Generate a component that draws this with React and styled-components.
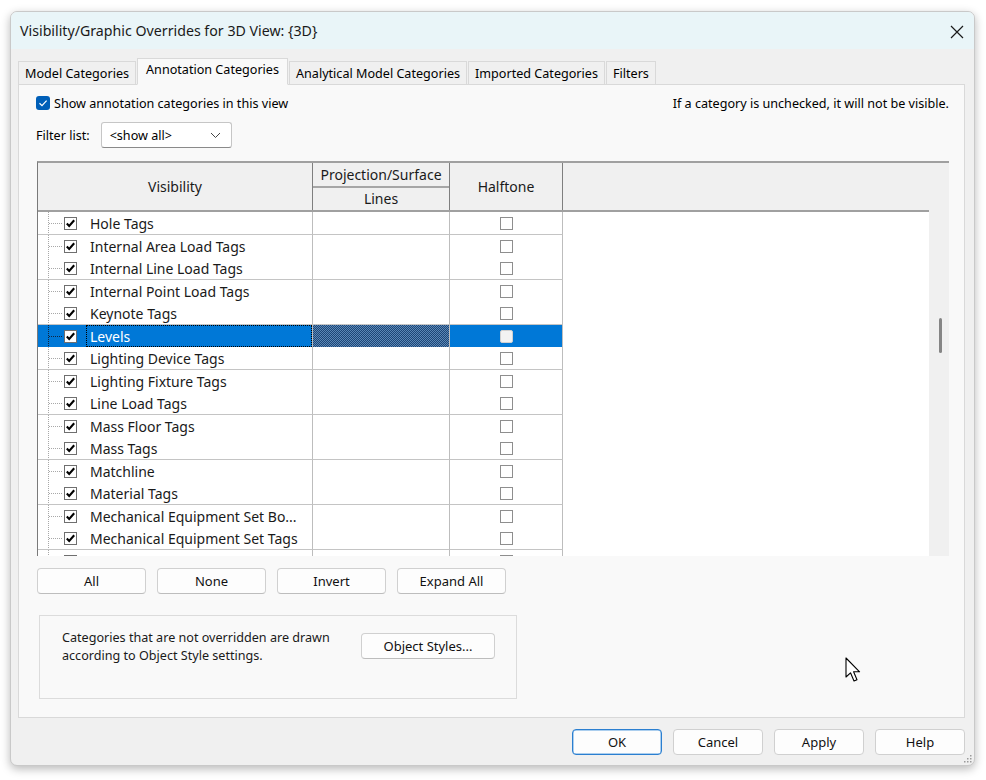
import React from "react";
import styled, { createGlobalStyle } from "styled-components";

const GlobalStyle = createGlobalStyle`
  html, body {
    margin: 0;
    padding: 0;
    background: #ffffff;
  }
  body {
    font-family: "Noto Sans", "Open Sans", sans-serif;
    color: #000;
  }
  #root {
    height: 780px;
    overflow: hidden;
  }
`;

const categories = [
  "Hole Tags",
  "Internal Area Load Tags",
  "Internal Line Load Tags",
  "Internal Point Load Tags",
  "Keynote Tags",
  "Levels",
  "Lighting Device Tags",
  "Lighting Fixture Tags",
  "Line Load Tags",
  "Mass Floor Tags",
  "Mass Tags",
  "Matchline",
  "Material Tags",
  "Mechanical Equipment Set Bo...",
  "Mechanical Equipment Set Tags",
  "Mechanical Equipment Tags",
];

const tabs = [
  "Model Categories",
  "Annotation Categories",
  "Analytical Model Categories",
  "Imported Categories",
  "Filters",
];

function CloseIcon() {
  return (
    <svg width="14" height="14" viewBox="0 0 14 14">
      <path d="M1 1 L13 13 M13 1 L1 13" stroke="#1a1a1a" strokeWidth="1.2" />
    </svg>
  );
}

function Connector({ $selected }) {
  const c = $selected ? "#10243d" : "#a8a8a8";
  return (
    <ConnectorSvg viewBox="0 0 26 22" preserveAspectRatio="none">
      <path d="M10.5 0 V22" stroke={c} strokeWidth="1" strokeDasharray="1 1" />
      <path d="M11 11.5 H25" stroke={c} strokeWidth="1" strokeDasharray="1 1" />
    </ConnectorSvg>
  );
}

function ClassicCheck() {
  return (
    <CheckSvg width="13" height="13" viewBox="0 0 13 13">
      <rect x="0.5" y="0.5" width="12" height="12" fill="#fff" stroke="#6f6f6f" />
      <path d="M2.8 6.4 L5.2 8.9 L10.2 3.3" fill="none" stroke="#000" strokeWidth="2.1" />
    </CheckSvg>
  );
}

function Cursor() {
  return (
    <CursorSvg width="18" height="27" viewBox="0 0 18 27">
      <path
        d="M1 1 L1 20 L5.5 15.8 L9 24 L12 22.7 L8.6 14.8 L14.6 14.8 Z"
        fill="#fff"
        stroke="#000"
        strokeWidth="1.1"
        strokeLinejoin="round"
      />
    </CursorSvg>
  );
}

function Grip() {
  const dots = [
    [8, 2],
    [5, 5],
    [8, 5],
    [2, 8],
    [5, 8],
    [8, 8],
  ];
  return (
    <GripSvg width="10" height="10" viewBox="0 0 10 10">
      {dots.map(([x, y], i) => (
        <rect key={i} x={x - 1} y={y - 1} width="1.5" height="1.5" fill="#9a9a9a" />
      ))}
    </GripSvg>
  );
}

function CategoryRow({ name, selected }) {
  return (
    <Row>
      <NameCell $selected={selected}>
        <Connector $selected={selected} />
        <ClassicCheck />
        <NameLabel $selected={selected}>{name}</NameLabel>
      </NameCell>
      <LinesCell $selected={selected} />
      <HalftoneCell $selected={selected}>
        <HalfBox $selected={selected} />
      </HalftoneCell>
      <FillerCell />
    </Row>
  );
}

export default function App() {
  return (
    <>
      <GlobalStyle />
      <Page>
        <Window>
          <TitleBar>
            <Title>Visibility/Graphic Overrides for 3D View: {"{3D}"}</Title>
            <CloseButton>
              <CloseIcon />
            </CloseButton>
          </TitleBar>
          <Body>
            <TabStrip>
              {tabs.map((t, i) => (
                <Tab key={t} $active={i === 1}>
                  {t}
                </Tab>
              ))}
            </TabStrip>
            <TabPanel>
              <TopRow>
                <ShowToggle>
                  <ModernCheck>
                    <svg width="10" height="10" viewBox="0 0 10 10">
                      <path d="M1.5 5.2 L4 7.6 L8.6 2.6" fill="none" stroke="#fff" strokeWidth="1.2" />
                    </svg>
                  </ModernCheck>
                  Show annotation categories in this view
                </ShowToggle>
                <Hint>If a category is unchecked, it will not be visible.</Hint>
              </TopRow>
              <FilterRow>
                <span>Filter list:</span>
                <Select>
                  <span>&lt;show all&gt;</span>
                  <svg width="11" height="7" viewBox="0 0 11 7">
                    <path d="M1 1 L5.5 5.5 L10 1" fill="none" stroke="#444" strokeWidth="1" />
                  </svg>
                </Select>
              </FilterRow>
              <Grid>
                <TableArea>
                  <HeaderRow>
                    <HeaderCell>Visibility</HeaderCell>
                    <ProjectionHeader>
                      <SubHeader $top>Projection/Surface</SubHeader>
                      <SubHeader>Lines</SubHeader>
                    </ProjectionHeader>
                    <HeaderCell>Halftone</HeaderCell>
                    <HeaderFiller />
                  </HeaderRow>
                  <Rows>
                    {categories.map((c) => (
                      <CategoryRow key={c} name={c} selected={c === "Levels"} />
                    ))}
                  </Rows>
                </TableArea>
                <ScrollTrack>
                  <ScrollThumb />
                </ScrollTrack>
              </Grid>
              <ActionRow>
                <ActionButton>All</ActionButton>
                <ActionButton>None</ActionButton>
                <ActionButton>Invert</ActionButton>
                <ActionButton>Expand All</ActionButton>
              </ActionRow>
              <GroupBox>
                <GroupText>
                  Categories that are not overridden are drawn
                  <br />
                  according to Object Style settings.
                </GroupText>
                <ObjectStylesButton>Object Styles...</ObjectStylesButton>
              </GroupBox>
              <Cursor />
            </TabPanel>
            <Footer>
              <DialogButton $primary>OK</DialogButton>
              <DialogButton>Cancel</DialogButton>
              <DialogButton>Apply</DialogButton>
              <DialogButton>Help</DialogButton>
            </Footer>
          </Body>
          <Grip />
        </Window>
      </Page>
    </>
  );
}

const Page = styled.div`
  height: 780px;
  padding: 11px 0 0 10px;
  box-sizing: border-box;
`;

const Window = styled.div`
  position: relative;
  width: 965px;
  height: 755px;
  box-sizing: border-box;
  border: 1px solid #c9c9c9;
  border-radius: 7px;
  overflow: hidden;
  display: flex;
  flex-direction: column;
  box-shadow: 0 3px 10px rgba(0, 0, 0, 0.28);
  background: #f0f0f0;
`;

const TitleBar = styled.div`
  height: 37px;
  flex-shrink: 0;
  display: flex;
  align-items: center;
  justify-content: space-between;
  padding: 0 10px 0 9px;
  background: #e9f5f8;
`;

const Title = styled.div`
  font-size: 14.2px;
  color: #1a1a1a;
`;

const CloseButton = styled.div`
  display: flex;
  align-items: center;
  padding-top: 2px;
`;

const Body = styled.div`
  flex: 1;
  display: flex;
  flex-direction: column;
  padding: 10px 9px 0 7px;
`;

const TabStrip = styled.div`
  display: flex;
  align-items: flex-end;
  height: 26px;
  position: relative;
  z-index: 1;
  margin-bottom: -1px;
`;

const Tab = styled.div`
  box-sizing: border-box;
  height: ${(p) => (p.$active ? "27px" : "24px")};
  padding: ${(p) => (p.$active ? "2px 8px 0" : "3px 6px 0")};
  margin-right: 1px;
  font-size: 12.6px;
  line-height: 18px;
  background: ${(p) => (p.$active ? "#f9f9f9" : "#f0f0f0")};
  border: 1px solid #d9d9d9;
  border-bottom: ${(p) => (p.$active ? "1px solid #f9f9f9" : "1px solid #d9d9d9")};
  white-space: nowrap;
`;

const TabPanel = styled.div`
  position: relative;
  height: 634px;
  box-sizing: border-box;
  border: 1px solid #d9d9d9;
  background: #f9f9f9;
  padding: 10px 15px 0 17px;
  display: flex;
  flex-direction: column;
  font-size: 12.6px;
`;

const TopRow = styled.div`
  display: flex;
  justify-content: space-between;
  align-items: center;
  height: 16px;
`;

const ShowToggle = styled.div`
  display: flex;
  align-items: center;
  gap: 4px;
`;

const ModernCheck = styled.span`
  width: 14px;
  height: 14px;
  border-radius: 3px;
  background: #005fb8;
  display: inline-flex;
  align-items: center;
  justify-content: center;
`;

const Hint = styled.div`
  padding-right: 0;
`;

const FilterRow = styled.div`
  display: flex;
  align-items: center;
  gap: 11px;
  margin-top: 11px;
  height: 26px;
`;

const Select = styled.div`
  box-sizing: border-box;
  width: 131px;
  height: 26px;
  display: flex;
  align-items: center;
  justify-content: space-between;
  padding: 0 10px 0 8px;
  background: #fff;
  border: 1px solid #c6c6c6;
  border-bottom-color: #8a8a8a;
  border-radius: 3px;
`;

const Grid = styled.div`
  margin-top: 13px;
  margin-left: 1px;
  width: 912px;
  height: 395px;
  box-sizing: border-box;
  display: flex;
  border-top: 2px solid #a0a0a0;
  border-left: 1px solid #7a7a7a;
`;

const TableArea = styled.div`
  flex: 1;
  display: flex;
  flex-direction: column;
  overflow: hidden;
  background: #fff;
`;

const columns = "275px 137px 113px 1fr";

const HeaderRow = styled.div`
  display: grid;
  grid-template-columns: ${columns};
  height: 49px;
  flex-shrink: 0;
  box-sizing: border-box;
  border-bottom: 2px solid #a0a0a0;
  background: #f0f0f0;
  font-size: 14px;
  color: #1a1a1a;
`;

const HeaderCell = styled.div`
  display: flex;
  align-items: center;
  justify-content: center;
  border-right: 1px solid #7f7f7f;
`;

const ProjectionHeader = styled.div`
  display: flex;
  flex-direction: column;
  border-right: 1px solid #7f7f7f;
`;

const SubHeader = styled.div`
  flex: 1;
  display: flex;
  align-items: center;
  justify-content: center;
  border-bottom: ${(p) => (p.$top ? "2px solid #a6a6a6" : "none")};
`;

const HeaderFiller = styled.div``;

const Rows = styled.div`
  display: flex;
  flex-direction: column;
`;

const Row = styled.div`
  display: grid;
  grid-template-columns: ${columns};
  height: 22px;
  flex-shrink: 0;
  font-size: 14px;

  &:nth-child(odd) {
    height: 23px;
  }
`;

const cellBorder = `
  box-sizing: border-box;
  border-right: 1px solid #bdbdbd;
  border-bottom: 1px solid #c4c4c4;
`;

const NameCell = styled.div`
  ${cellBorder}
  display: flex;
  align-items: stretch;
  background: ${(p) => (p.$selected ? "#0078d7" : "#fff")};
`;

const ConnectorSvg = styled.svg`
  width: 26px;
  height: 100%;
  flex-shrink: 0;
`;

const CheckSvg = styled.svg`
  align-self: center;
  flex-shrink: 0;
`;

const NameLabel = styled.div`
  flex: 1;
  display: flex;
  align-items: center;
  margin-left: 9px;
  padding-left: 3px;
  box-sizing: border-box;
  white-space: nowrap;
  overflow: hidden;
  color: ${(p) => (p.$selected ? "#fff" : "#1a1a1a")};
  border: 1px dotted ${(p) => (p.$selected ? "#000" : "transparent")};
`;

const LinesCell = styled.div`
  ${cellBorder}
  background-color: ${(p) => (p.$selected ? "#2f5f92" : "#fff")};
  background-image: ${(p) =>
    p.$selected
      ? "repeating-conic-gradient(#1d4677 0 25%, #5b88b6 0 50%)"
      : "none"};
  background-size: 2px 2px;
`;

const HalftoneCell = styled.div`
  ${cellBorder}
  display: flex;
  align-items: center;
  justify-content: center;
  background: ${(p) => (p.$selected ? "#0078d7" : "#fff")};
`;

const HalfBox = styled.span`
  width: 13px;
  height: 13px;
  box-sizing: border-box;
  border: 1px solid ${(p) => (p.$selected ? "#d0d0d0" : "#8e8e8e")};
  border-radius: ${(p) => (p.$selected ? "2px" : "0")};
  background: ${(p) => (p.$selected ? "#f2f2f2" : "#fff")};
`;

const FillerCell = styled.div`
  background: #fff;
`;

const ScrollTrack = styled.div`
  width: 20px;
  flex-shrink: 0;
  background: #f0f0f0;
  display: flex;
  justify-content: center;
  padding-left: 2px;
  box-sizing: border-box;
`;

const ScrollThumb = styled.div`
  width: 3px;
  height: 35px;
  margin-top: 155px;
  border-radius: 2px;
  background: #858585;
`;

const ActionRow = styled.div`
  display: flex;
  gap: 11px;
  margin-top: 12px;
  margin-left: 1px;
`;

const buttonBase = `
  box-sizing: border-box;
  height: 26px;
  display: flex;
  align-items: center;
  justify-content: center;
  background: #fdfdfd;
  border: 1px solid #d0d0d0;
  border-bottom-color: #bdbdbd;
  border-radius: 4px;
  font-size: 13px;
  color: #111;
`;

const ActionButton = styled.div`
  ${buttonBase}
  width: 109px;
`;

const GroupBox = styled.div`
  margin-top: 21px;
  margin-left: 3px;
  width: 478px;
  height: 84px;
  box-sizing: border-box;
  border: 1px solid #dcdcdc;
  display: flex;
  align-items: flex-start;
  padding: 13px 0 0 22px;
  gap: 23px;
`;

const GroupText = styled.div`
  font-size: 12.6px;
  line-height: 18px;
  color: #1a1a1a;
  width: 276px;
`;

const ObjectStylesButton = styled.div`
  ${buttonBase}
  width: 134px;
  margin-top: 4px;
`;

const CursorSvg = styled.svg`
  position: absolute;
  left: 826px;
  top: 572px;
`;

const Footer = styled.div`
  display: flex;
  justify-content: flex-end;
  gap: 11px;
  margin-top: 11px;
`;

const DialogButton = styled.div`
  ${buttonBase}
  width: 90px;
  border: ${(p) => (p.$primary ? "1px solid #2b7fd0" : "1px solid #d0d0d0")};
  box-shadow: ${(p) => (p.$primary ? "inset 0 0 0 0.5px #5aa0e0" : "none")};
`;

const GripSvg = styled.svg`
  position: absolute;
  right: 1px;
  bottom: 1px;
`;
